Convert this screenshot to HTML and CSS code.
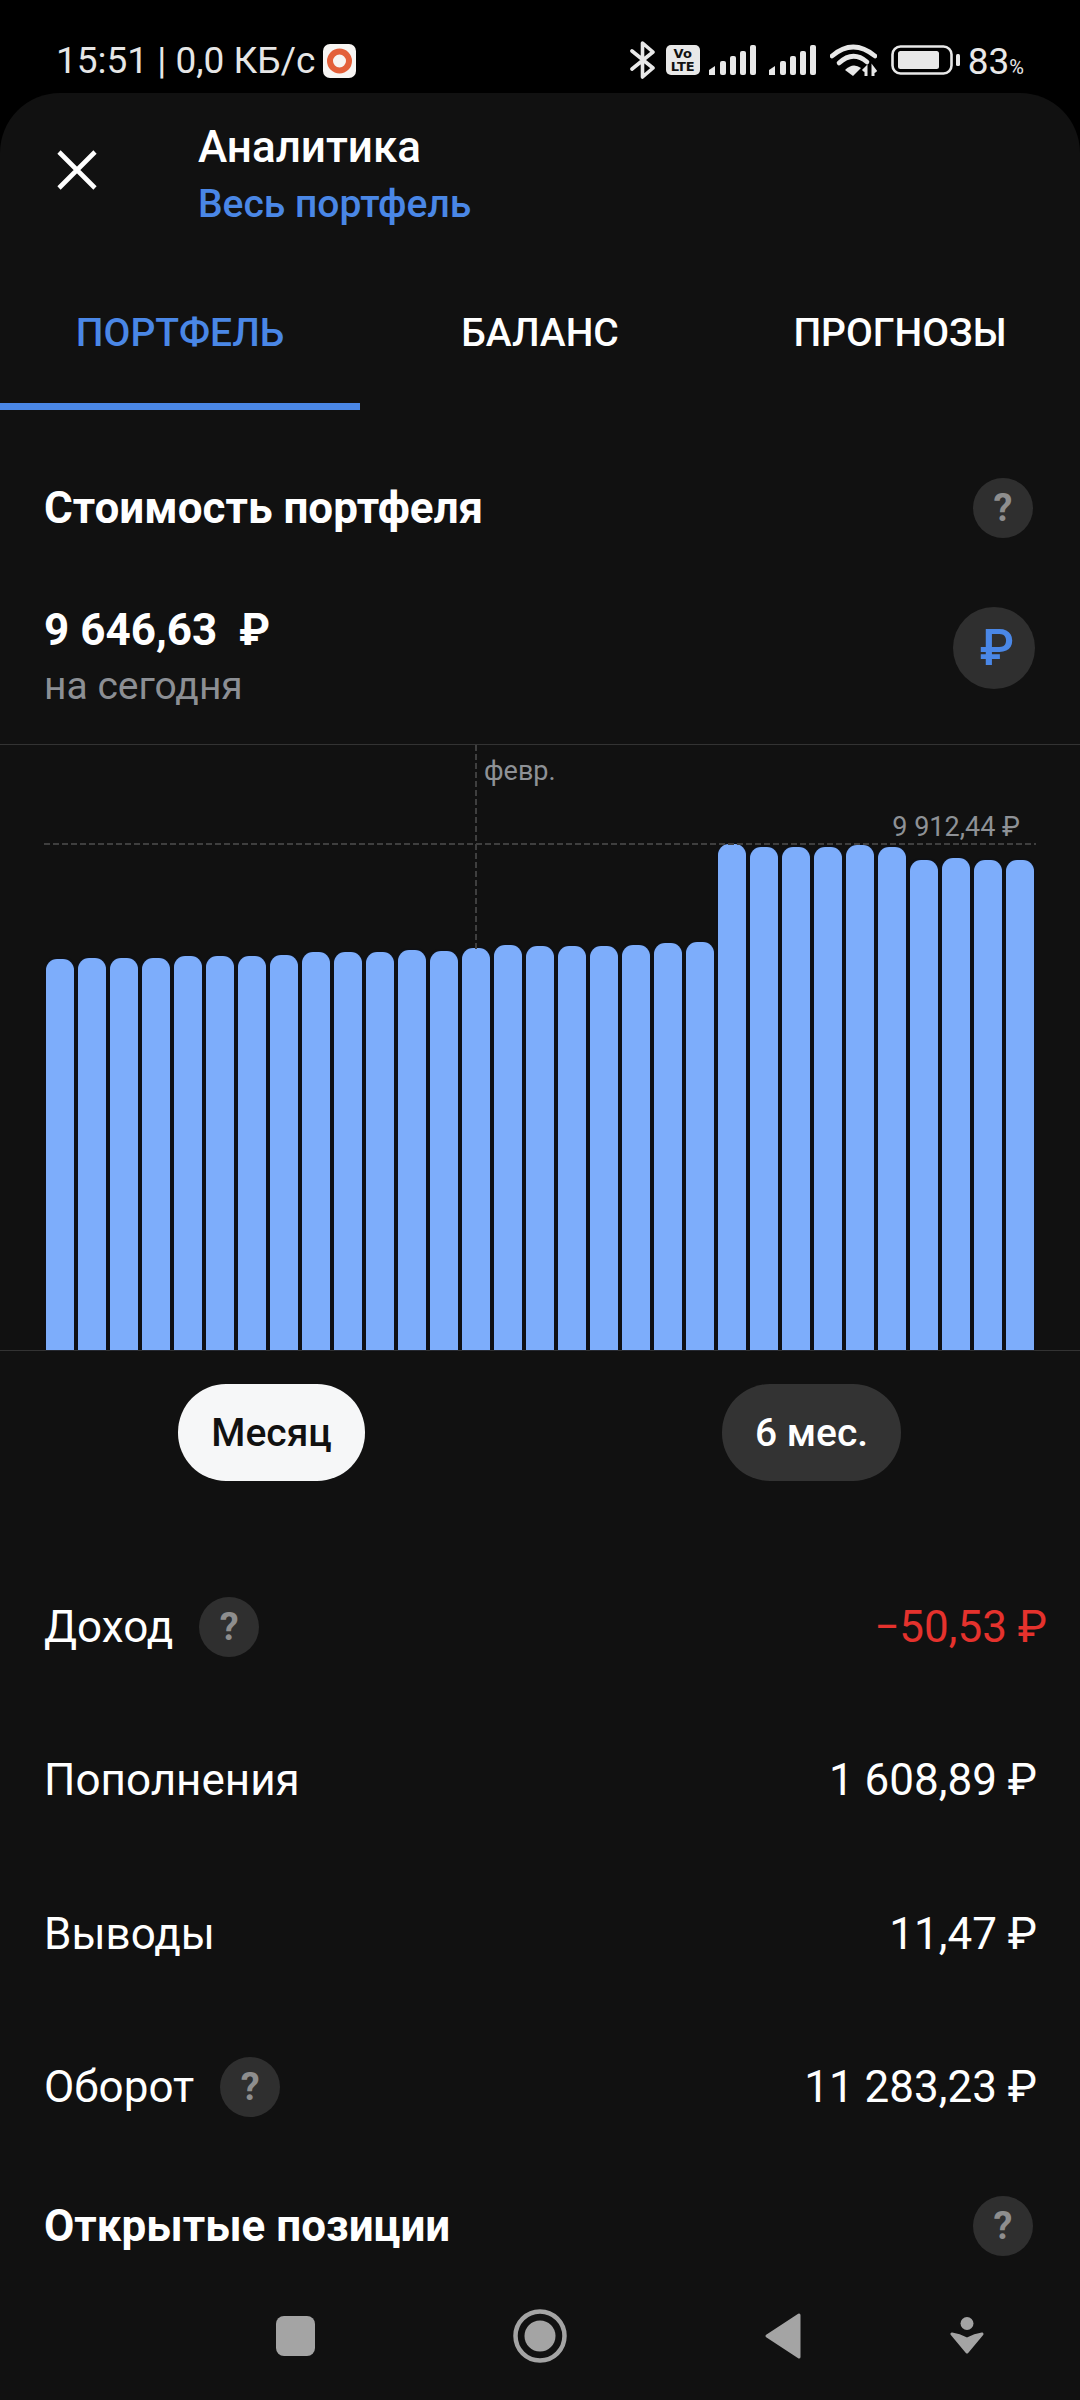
FILE: index.html
```html
<!DOCTYPE html>
<html lang="ru">
<head>
<meta charset="utf-8">
<title>Аналитика</title>
<link rel="stylesheet" href="styles.css">
</head>
<body>
<div class="screen">
  <header class="status">
    <div class="status-left">
      <span class="clock">15:51 | 0,0 КБ/с</span>
      <svg class="app-badge" width="33" height="34" viewBox="0 0 33 34"><rect width="33" height="34" rx="7" fill="#f7f5f3"/><circle cx="16.5" cy="17" r="9.5" fill="none" stroke="#e3603a" stroke-width="6"/></svg>
    </div>
    <div class="status-right">
      <svg width="26" height="38" viewBox="0 0 26 38"><path d="M2 10 L23 27 L12.5 36 V2 L23 11 L2 28" fill="none" stroke="#e8e8e8" stroke-width="3.6" stroke-linecap="round" stroke-linejoin="round"/></svg>
      <span class="volte"><span>Vo</span><span>LTE</span></span>
      <svg class="sig-one" width="48" height="30" viewBox="0 0 48 30"><path d="M0 30V25L6 21V30Z" fill="#e8e8e8"/><rect x="11" y="16" width="6" height="14" rx="2" fill="#e8e8e8"/><rect x="21" y="11" width="6" height="19" rx="2" fill="#e8e8e8"/><rect x="31" y="6" width="6" height="24" rx="2" fill="#e8e8e8"/><rect x="41" y="0" width="6" height="30" rx="2" fill="#e8e8e8"/></svg>
      <svg class="sig-two" width="48" height="30" viewBox="0 0 48 30"><path d="M0 30V25L6 21V30Z" fill="#e8e8e8"/><rect x="11" y="16" width="6" height="14" rx="2" fill="#e8e8e8"/><rect x="21" y="11" width="6" height="19" rx="2" fill="#e8e8e8"/><rect x="31" y="6" width="6" height="24" rx="2" fill="#e8e8e8"/><rect x="41" y="0" width="6" height="30" rx="2" fill="#e8e8e8"/></svg>
      <svg class="wifi" width="47" height="34" viewBox="0 0 47 34"><path d="M2 13 Q23 -5 45 13" fill="none" stroke="#e8e8e8" stroke-width="4.6" stroke-linecap="round"/><path d="M9 20 Q23 7 37 19" fill="none" stroke="#e8e8e8" stroke-width="4.6" stroke-linecap="round"/><path d="M15 27 Q23 19 31 25 L23 33 Z" fill="#e8e8e8"/><path d="M36 33 V25 L33 28 M43 33 V25 L46 29" fill="none" stroke="#e8e8e8" stroke-width="3"/></svg>
      <svg class="battery" width="69" height="30" viewBox="0 0 69 30"><rect x="1.5" y="1.5" width="59" height="27" rx="8" fill="none" stroke="#e8e8e8" stroke-width="2.6"/><rect x="7" y="6" width="41" height="18" rx="2.5" fill="#e8e8e8"/><rect x="65" y="9" width="4" height="12" rx="1.5" fill="#e8e8e8"/></svg>
      <span class="batt-text">83<span class="batt-pct">%</span></span>
    </div>
  </header>

  <main class="sheet">
    <section class="head">
      <svg class="close" width="40" height="40" viewBox="0 0 40 40"><path d="M2 2 L38 38 M38 2 L2 38" stroke="#fff" stroke-width="4.6" fill="none"/></svg>
      <div class="head-titles">
        <div class="head-title">Аналитика</div>
        <div class="head-sub">Весь портфель</div>
      </div>
    </section>

    <nav class="tabs">
      <div class="tab tab-active">ПОРТФЕЛЬ</div>
      <div class="tab">БАЛАНС</div>
      <div class="tab">ПРОГНОЗЫ</div>
    </nav>

    <section class="title-row">
      <h2 class="section-title">Стоимость портфеля</h2>
      <span class="help">?</span>
    </section>

    <section class="value-row">
      <div>
        <div class="value-main">9 646,63&nbsp; ₽</div>
        <div class="value-sub">на сегодня</div>
      </div>
      <span class="currency">₽</span>
    </section>

    <section class="chart">
      <span class="v-dash"></span>
      <span class="h-dash"></span>
      <span class="month">февр.</span>
      <span class="max">9 912,44 ₽</span>
      <div class="bars">
        <i style="height:391px"></i><i style="height:392px"></i><i style="height:392px"></i><i style="height:392px"></i><i style="height:394px"></i><i style="height:394px"></i><i style="height:394px"></i><i style="height:395px"></i><i style="height:398px"></i><i style="height:398px"></i><i style="height:398px"></i><i style="height:400px"></i><i style="height:399px"></i><i style="height:402px"></i><i style="height:405px"></i><i style="height:404px"></i><i style="height:404px"></i><i style="height:404px"></i><i style="height:405px"></i><i style="height:407px"></i><i style="height:408px"></i><i style="height:506px"></i><i style="height:503px"></i><i style="height:503px"></i><i style="height:503px"></i><i style="height:505px"></i><i style="height:503px"></i><i style="height:490px"></i><i style="height:492px"></i><i style="height:490px"></i><i style="height:490px"></i>
      </div>
    </section>

    <section class="pills">
      <span class="pill pill-on">Месяц</span>
      <span class="pill pill-off">6 мес.</span>
    </section>

    <section class="rows">
      <div class="row row-income">
        <div class="row-label">Доход <span class="help">?</span></div>
        <div class="amount amount-neg">−50,53 ₽</div>
      </div>
      <div class="row">
        <div class="row-label">Пополнения</div>
        <div class="amount">1 608,89 ₽</div>
      </div>
      <div class="row">
        <div class="row-label">Выводы</div>
        <div class="amount">11,47 ₽</div>
      </div>
      <div class="row">
        <div class="row-label">Оборот <span class="help">?</span></div>
        <div class="amount">11 283,23 ₽</div>
      </div>
    </section>

    <section class="positions">
      <h2 class="section-title">Открытые позиции</h2>
      <span class="help">?</span>
    </section>

    <footer class="navbar">
      <svg class="nav-square" width="39" height="40" viewBox="0 0 39 40"><rect width="39" height="40" rx="8" fill="#a4a4a4"/></svg>
      <svg class="nav-home" width="54" height="54" viewBox="0 0 54 54"><circle cx="27" cy="27" r="24.5" fill="none" stroke="#a4a4a4" stroke-width="4.5"/><circle cx="27" cy="27" r="15.5" fill="#a4a4a4"/></svg>
      <svg class="nav-back" width="36" height="46" viewBox="0 0 36 46"><path d="M34 2 V44 L2 23 Z" fill="#a4a4a4" stroke="#a4a4a4" stroke-width="3" stroke-linejoin="round"/></svg>
      <svg class="nav-down" width="34" height="37" viewBox="0 0 34 37"><ellipse cx="17" cy="6.5" rx="6.5" ry="6.5" fill="#a4a4a4"/><path d="M2 17 Q9 18 17 22 Q25 18 32 17 L17 35 Z" fill="#a4a4a4" stroke="#a4a4a4" stroke-width="3" stroke-linejoin="round"/></svg>
    </footer>
  </main>
</div>
</body>
</html>
```

FILE: styles.css
```css
* { box-sizing: border-box; }
html, body { margin: 0; padding: 0; background: #000; }
body { font-family: Roboto, "Noto Sans", sans-serif; color: #fff; }
.screen { width: 1080px; height: 2400px; overflow: hidden; background: #000; display: flex; flex-direction: column; }

.status { height: 93px; flex: none; display: flex; justify-content: space-between; align-items: flex-start; padding: 41px 56px 0 56px; }
.status-left { display: flex; align-items: center; height: 40px; }
.clock { font-size: 37px; line-height: 40px; color: #e6e6e6; }
.app-badge { margin-left: 8px; }
.status-right { display: flex; align-items: center; height: 38px; color: #e8e8e8; }
.volte { width: 34px; height: 30px; margin-left: 10px; background: #e8e8e8; border-radius: 5px; color: #111; font-size: 13px; font-weight: 700; line-height: 13px; display: flex; flex-direction: column; align-items: center; justify-content: center; font-family: "DejaVu Sans", sans-serif; }
.sig-one { margin-left: 9px; }
.sig-two { margin-left: 12px; }
.wifi { margin-left: 13px; }
.battery { margin-left: 14px; }
.batt-text { margin-left: 8px; margin-top: 8px; font-size: 37px; line-height: 38px; }
.batt-pct { font-size: 20px; }

.sheet { flex: 1; display: flex; flex-direction: column; background: #111; border-radius: 60px 60px 0 0; }

.head { height: 158px; flex: none; display: flex; align-items: flex-start; padding-left: 57px; }
.close { margin-top: 57px; }
.head-titles { margin-left: 101px; padding-top: 27px; }
.head-title { font-size: 44px; line-height: 54px; font-weight: 500; }
.head-sub { font-size: 39px; line-height: 46px; font-weight: 500; color: #4a87e6; margin-top: 7px; }

.tabs { height: 159px; flex: none; display: grid; grid-template-columns: repeat(3, 360px); }
.tab { font-size: 39px; font-weight: 500; display: flex; justify-content: center; padding-top: 60px; line-height: 44px; border-bottom: 7px solid transparent; }
.tab-active { color: #4a87e6; border-bottom-color: #4a87e6; }

.title-row { height: 196px; flex: none; display: flex; align-items: center; justify-content: space-between; padding: 0 47px 0 44px; }
.section-title { margin: 0; font-size: 44px; font-weight: 700; line-height: 48px; }
.help { width: 60px; height: 60px; border-radius: 50%; background: #2f2f2f; color: #8e8e8e; font-size: 38px; font-weight: 700; display: inline-flex; align-items: center; justify-content: center; flex: none; }

.value-row { height: 138px; flex: none; display: flex; justify-content: space-between; padding: 0 45px 0 44px; }
.value-main { font-size: 44px; font-weight: 700; line-height: 48px; }
.value-sub { font-size: 39px; line-height: 44px; color: #8c8f94; margin-top: 10px; }
.currency { width: 82px; height: 82px; border-radius: 50%; background: #2f2f2f; color: #4a87e6; font-size: 50px; font-weight: 500; display: flex; align-items: center; justify-content: center; margin-top: 1px; padding-left: 6px; }

.chart { position: relative; height: 607px; flex: none; border-top: 1px solid #333; border-bottom: 1px solid #333; display: flex; align-items: flex-end; padding: 0 44px 0 46px; }
.bars { display: grid; grid-template-columns: repeat(31, 27.5px); column-gap: 4.5px; align-items: end; width: 100%; }
.bars i { display: block; background: #7dadfb; border-radius: 11px 11px 0 0; box-shadow: 0 0 2px #05122a; }
.v-dash { position: absolute; left: 475px; top: 0; width: 2px; height: 204px; background: repeating-linear-gradient(to bottom, #3f3f3f 0 6px, transparent 6px 9px); }
.h-dash { position: absolute; left: 44px; top: 98px; width: 992px; height: 2px; background: repeating-linear-gradient(to right, #3f3f3f 0 6px, transparent 6px 9px); }
.month { position: absolute; left: 484px; top: 9px; font-size: 27px; line-height: 34px; color: #8e9196; }
.max { position: absolute; right: 60px; top: 65px; font-size: 27px; line-height: 34px; color: #8e9196; }

.pills { height: 199px; flex: none; display: flex; padding: 33px 0 0 178px; align-items: flex-start; }
.pill { height: 97px; border-radius: 48px; display: flex; align-items: center; justify-content: center; font-size: 39px; font-weight: 500; }
.pill-on { width: 187px; background: #f6f7f8; color: #111; }
.pill-off { width: 179px; margin-left: 357px; background: #333; color: #fff; }

.rows { flex: none; }
.row { height: 153.5px; display: flex; align-items: center; justify-content: space-between; padding: 0 43px 0 44px; }
.row-income { padding-right: 33px; }
.row-label { font-size: 44px; display: flex; align-items: center; gap: 26px; }
.amount { font-size: 44px; }
.amount-neg { color: #e5322d; }

.positions { height: 124px; flex: none; display: flex; align-items: center; justify-content: space-between; padding: 0 47px 0 44px; }

.navbar { flex: 1; display: flex; align-items: center; padding: 0 0 17px 276px; }
.nav-home { margin-left: 198px; }
.nav-back { margin-left: 198px; }
.nav-down { margin-left: 149px; }
```
